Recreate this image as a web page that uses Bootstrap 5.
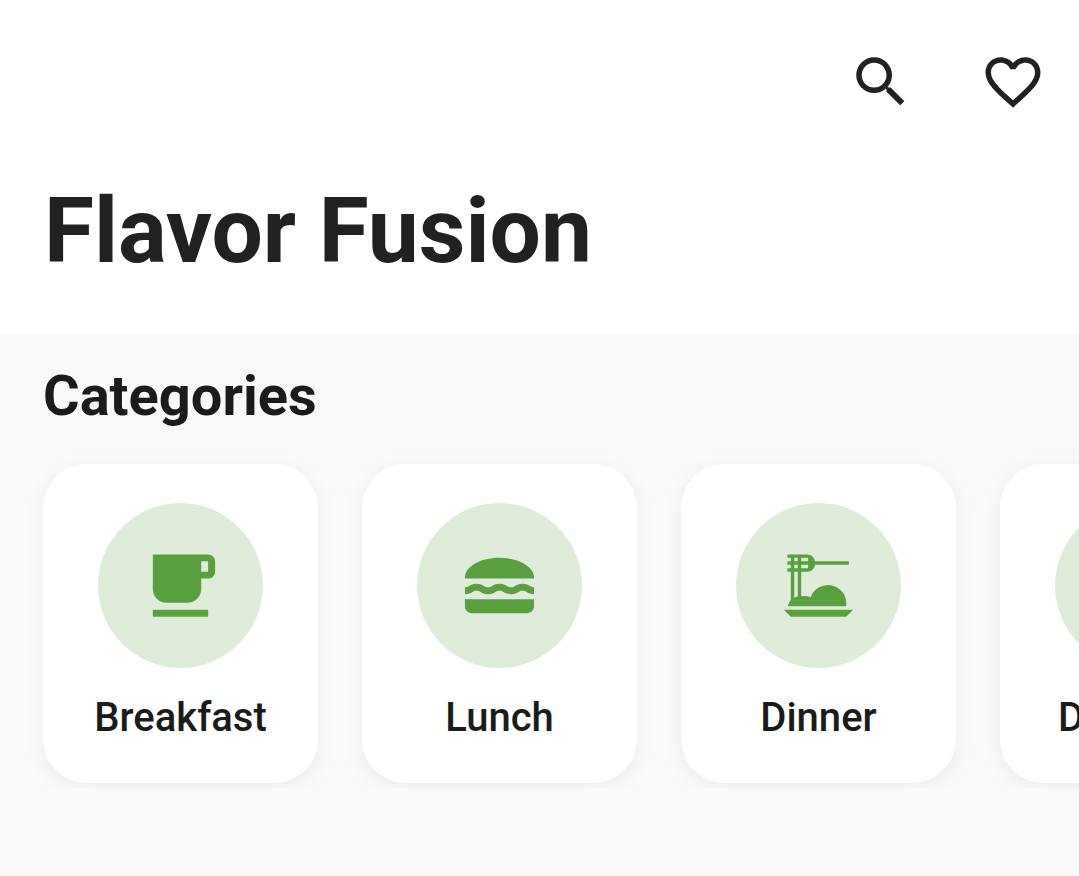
<!DOCTYPE html>
<html lang="en">
<head>
<meta charset="utf-8">
<meta name="viewport" content="width=device-width, initial-scale=1">
<title>Flavor Fusion</title>
<link href="https://cdn.jsdelivr.net/npm/bootstrap@5.3.0/dist/css/bootstrap.min.css" rel="stylesheet">
<style>
  body { font-family: Roboto, "Liberation Sans", sans-serif; background: #f9f9f9; color: #1a1c19; }
  .app-header { background: #fff; color: #212121; padding: 44px 28px 54px 44px; }
  .app-actions { gap: 56px; }
  .icon-btn { padding: 5px; color: #212121; line-height: 1; }
  .icon-btn svg { width: 66px; height: 66px; display: block; }
  .app-title { font-size: 91px; line-height: 100px; font-weight: 700; margin-top: 61px; }
  .section-title { font-size: 56px; line-height: 72px; font-weight: 700; padding: 25px 43px 0; }
  .category-strip { gap: 44px; padding: 32px 44px 5px 43px; overflow-x: auto; scrollbar-width: none; }
  .category-strip::-webkit-scrollbar { display: none; }
  .category-card { flex: 0 0 275px; height: 319px; padding-top: 39px; border-radius: 44px; background: #fff; color: #1a1c19; box-shadow: 0 5px 22px rgba(0, 0, 0, .05); }
  .category-icon { width: 165px; height: 165px; background: #dfecda; color: #5ba040; }
  .category-icon svg { width: 83px; height: 83px; }
  .category-label { font-size: 40px; line-height: 52px; font-weight: 500; margin-top: 24px; }
</style>
</head>
<body>
<header class="app-header">
  <div class="app-actions d-flex justify-content-end">
    <button type="button" class="btn border-0 icon-btn" aria-label="Search">
      <svg viewBox="0 0 24 24" fill="currentColor" aria-hidden="true"><path d="M15.5 14h-.79l-.28-.27A6.471 6.471 0 0 0 16 9.5 6.5 6.5 0 1 0 9.5 16c1.61 0 3.09-.59 4.23-1.57l.27.28v.79l5 4.99L20.49 19l-4.99-5zm-6 0C7.01 14 5 11.99 5 9.5S7.01 5 9.5 5 14 7.01 14 9.5 11.99 14 9.5 14z"/></svg>
    </button>
    <button type="button" class="btn border-0 icon-btn" aria-label="Favorites">
      <svg viewBox="0 0 24 24" fill="currentColor" aria-hidden="true"><path d="M16.5 3c-1.74 0-3.41.81-4.5 2.09C10.91 3.81 9.24 3 7.5 3 4.42 3 2 5.42 2 8.5c0 3.78 3.4 6.86 8.55 11.54L12 21.35l1.45-1.32C18.6 15.36 22 12.28 22 8.5 22 5.42 19.58 3 16.5 3zm-4.4 15.55l-.1.1-.1-.1C7.14 14.24 4 11.39 4 8.5 4 6.5 5.5 5 7.5 5c1.54 0 3.04.99 3.57 2.36h1.87C13.46 5.99 14.96 5 16.5 5c2 0 3.5 1.5 3.5 3.5 0 2.89-3.14 5.74-7.9 10.05z"/></svg>
    </button>
  </div>
  <h1 class="app-title mb-0">Flavor Fusion</h1>
</header>
<main>
  <h2 class="section-title mb-0">Categories</h2>
  <nav class="category-strip d-flex" aria-label="Categories">
    <a href="#breakfast" class="category-card d-flex flex-column align-items-center text-decoration-none">
      <span class="category-icon rounded-circle d-flex align-items-center justify-content-center">
        <svg viewBox="0 0 24 24" fill="currentColor" aria-hidden="true"><path d="M20 3H4v10c0 2.21 1.79 4 4 4h6c2.21 0 4-1.79 4-4v-3h2c1.11 0 2-.9 2-2V5c0-1.11-.89-2-2-2zm0 5h-2V5h2v3zM4 19h16v2H4z"/></svg>
      </span>
      <span class="category-label">Breakfast</span>
    </a>
    <a href="#lunch" class="category-card d-flex flex-column align-items-center text-decoration-none">
      <span class="category-icon rounded-circle d-flex align-items-center justify-content-center">
        <svg viewBox="0 0 24 24" fill="currentColor" aria-hidden="true"><path d="M22 10c.32-3.28-4.28-6-9.99-6C6.3 4 1.7 6.72 2.02 10H22zM5.35 13.5c.55 0 .78.14 1.15.36.45.27 1.07.64 2.18.64s1.73-.37 2.18-.64c.37-.23.59-.36 1.15-.36.55 0 .78.14 1.15.36.45.27 1.07.64 2.18.64 1.11 0 1.73-.37 2.18-.64.37-.23.59-.36 1.15-.36.55 0 .78.14 1.15.36.45.27 1.07.63 2.17.64v-1.98c-.79-.16-1.05-.38-1.15-.38-.45-.27-1.07-.64-2.18-.64s-1.73.37-2.18.64c-.37.23-.6.36-1.15.36s-.78-.14-1.15-.36c-.45-.27-1.07-.64-2.18-.64s-1.73.37-2.18.64c-.37.23-.59.36-1.15.36-.55 0-.78-.14-1.15-.36-.45-.27-1.07-.64-2.18-.64s-1.73.37-2.18.64c-.37.23-.59.36-1.15.36v2c1.11 0 1.73-.37 2.21-.64.36-.23.59-.36 1.13-.36zM2 16v2c0 1.1.9 2 2 2h16c1.1 0 2-.9 2-2v-2H2z"/></svg>
      </span>
      <span class="category-label">Lunch</span>
    </a>
    <a href="#dinner" class="category-card d-flex flex-column align-items-center text-decoration-none">
      <span class="category-icon rounded-circle d-flex align-items-center justify-content-center">
        <svg viewBox="0 0 24 24" fill="currentColor" aria-hidden="true"><path d="M2 19h20l-2 2H4l-2-2zM3 3v1h1v1H3v1h1v1H3v1h1v8.2c-.38.5-.7 1.1-.86 1.8h16.8c.1-.4.1-.8.1-1.1a5.3 5.3 0 0 0-10.3-1.5A4.9 4.9 0 0 0 7 15.1V8h1.75c1.2 0 2.06-.75 2.25-2h9.8V5H11C10.8 3.8 9.95 3 8.75 3H3zm2 1h1v1H5V4zm2 0h2v1H7V4zM5 6h1v1H5V6zm2 0h2v1H7V6zM5 8h1v7.2a4 4 0 0 0-1 .4V8z"/></svg>
      </span>
      <span class="category-label">Dinner</span>
    </a>
    <a href="#desserts" class="category-card d-flex flex-column align-items-center text-decoration-none">
      <span class="category-icon rounded-circle"></span>
      <span class="category-label">Desserts</span>
    </a>
  </nav>
</main>
<script src="https://cdn.jsdelivr.net/npm/bootstrap@5.3.0/dist/js/bootstrap.bundle.min.js"></script>
</body>
</html>
